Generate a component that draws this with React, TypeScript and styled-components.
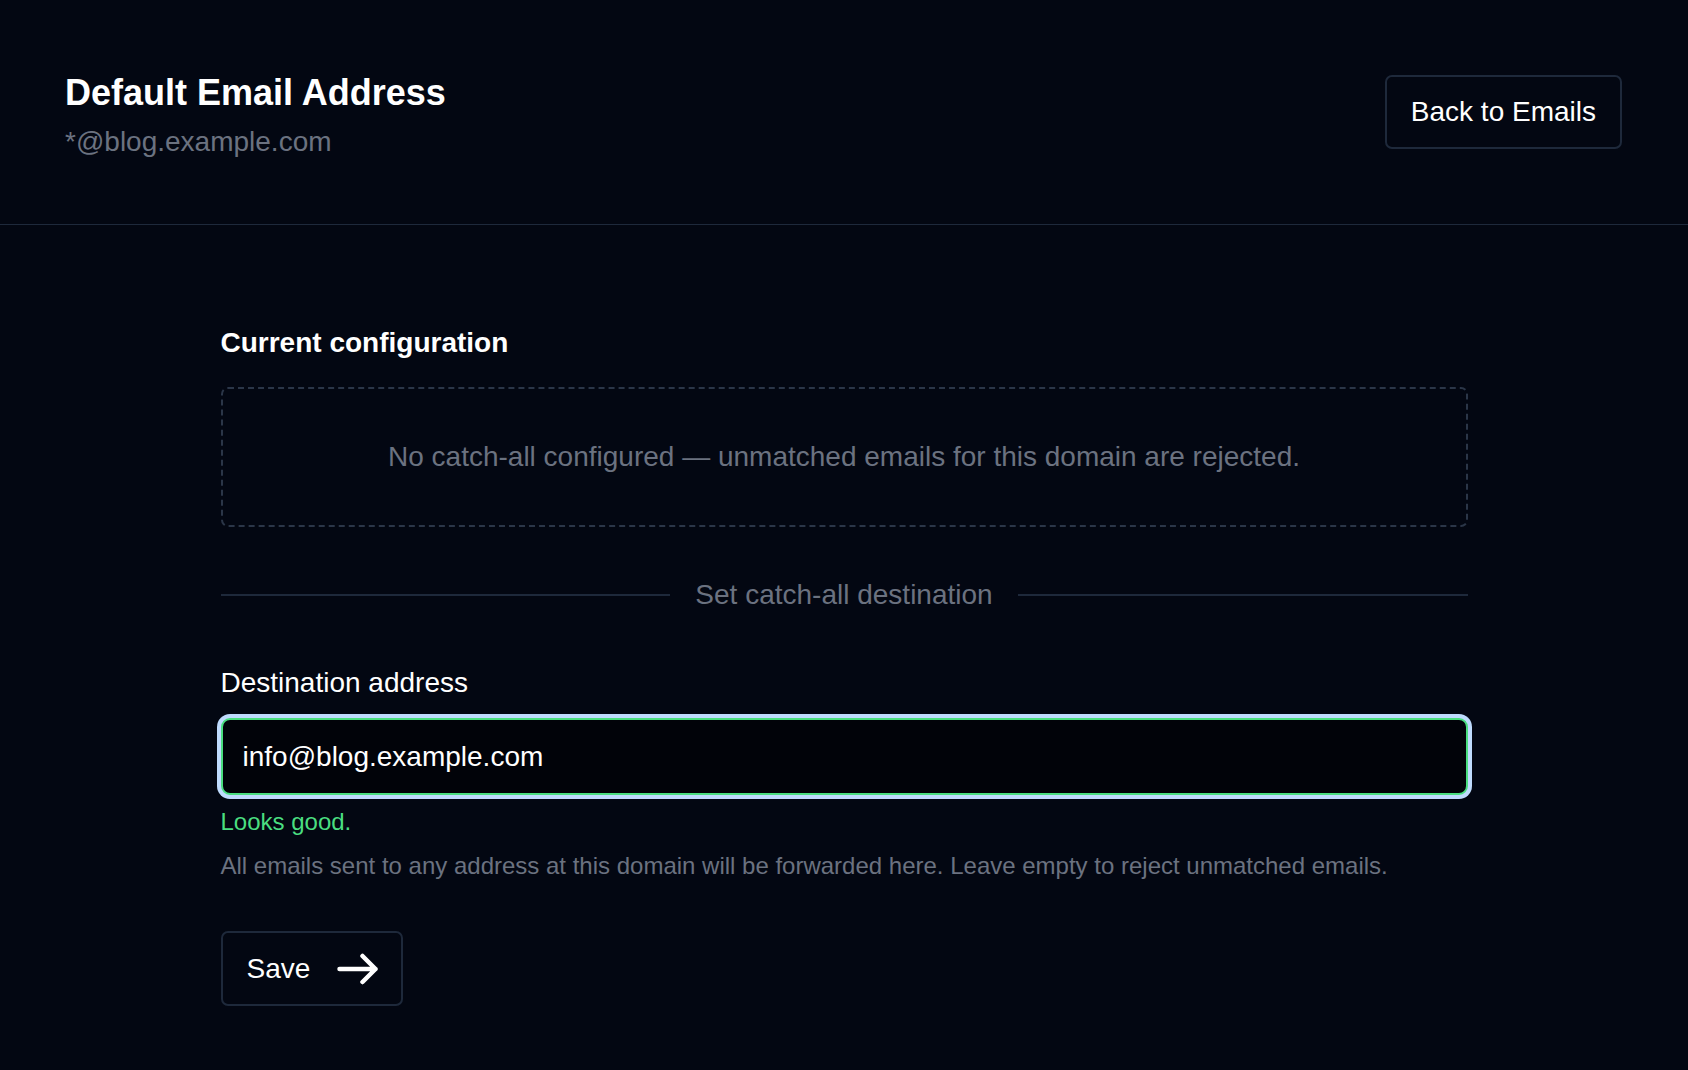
import React from 'react'
import styled, { createGlobalStyle } from 'styled-components'

const GlobalStyle = createGlobalStyle`
  html, body {
    margin: 0;
    padding: 0;
    background: #030712;
  }

  body {
    font-family: 'Liberation Sans', Arial, sans-serif;
    color: #f8fafc;
  }

  * {
    box-sizing: border-box;
  }
`

const Page = styled.div`
  min-height: 1070px;
  background: #030712;
`

const Header = styled.header`
  display: flex;
  justify-content: space-between;
  align-items: flex-start;
  padding: 75px 66px 61px 65px;
  border-bottom: 1px solid #1e293b;
`

const TitleBlock = styled.div`
  display: flex;
  flex-direction: column;
`

const Title = styled.h1`
  margin: 0;
  font-size: 36px;
  line-height: 36px;
  font-weight: 700;
  color: #ffffff;
`

const Subtitle = styled.p`
  margin: 10px 0 0;
  font-size: 28px;
  line-height: 42px;
  color: #6b7280;
`

const OutlineButton = styled.button<{ $height: number; $padding: string }>`
  display: inline-flex;
  align-items: center;
  gap: 27px;
  height: ${({ $height }) => $height}px;
  padding: ${({ $padding }) => $padding};
  background: transparent;
  border: 2px solid #1e293b;
  border-radius: 7px;
  font-family: inherit;
  font-size: 28px;
  color: #ffffff;
  cursor: pointer;
`

const Main = styled.main`
  width: 1247px;
  margin: 0 auto;
  padding-top: 97px;
  display: flex;
  flex-direction: column;
`

const SectionTitle = styled.h2`
  margin: 0;
  font-size: 28px;
  line-height: 42px;
  font-weight: 700;
  color: #ffffff;
`

const EmptyBox = styled.div`
  margin-top: 23px;
  padding: 47px 20px;
  border: 2px dashed #2b3648;
  border-radius: 7px;
  text-align: center;
  font-size: 28px;
  line-height: 42px;
  color: #6b7280;
`

const DividerRow = styled.div`
  margin-top: 47px;
  display: flex;
  align-items: center;
  gap: 25px;
  font-size: 28px;
  line-height: 42px;
  color: #6b7280;

  &::before,
  &::after {
    content: '';
    flex: 1;
    height: 2px;
    background: #1e293b;
  }
`

const Label = styled.label`
  margin-top: 46px;
  font-size: 28px;
  line-height: 42px;
  color: #ffffff;
`

const Input = styled.input`
  margin-top: 14px;
  height: 77px;
  width: 100%;
  padding: 0 20px;
  background: #010309;
  border: 2.5px solid #4ade80;
  border-radius: 9px;
  box-shadow: 0 0 0 4px #bfdbfe;
  outline: none;
  font-family: inherit;
  font-size: 28px;
  color: #ffffff;
`

const Hint = styled.p<{ $tone: 'success' | 'muted' }>`
  margin: ${({ $tone }) => ($tone === 'success' ? '9px' : '8px')} 0 0;
  font-size: 24px;
  line-height: 36px;
  color: ${({ $tone }) => ($tone === 'success' ? '#4ade80' : '#6b7280')};
`

const Actions = styled.div`
  margin-top: 47px;
  display: flex;
`

const ArrowIcon = () => (
  <svg width="41" height="32" viewBox="0 0 41 32" fill="none">
    <path
      d="M2.5 16H38.5M25.5 3L38.5 16L25.5 29"
      stroke="#ffffff"
      strokeWidth="4.5"
      strokeLinecap="round"
      strokeLinejoin="round"
    />
  </svg>
)

export default function App() {
  return (
    <>
      <GlobalStyle />
      <Page>
        <Header>
          <TitleBlock>
            <Title>Default Email Address</Title>
            <Subtitle>*@blog.example.com</Subtitle>
          </TitleBlock>
          <OutlineButton $height={74} $padding="0 24px">
            Back to Emails
          </OutlineButton>
        </Header>

        <Main>
          <SectionTitle>Current configuration</SectionTitle>
          <EmptyBox>
            No catch-all configured — unmatched emails for this domain are
            rejected.
          </EmptyBox>

          <DividerRow>Set catch-all destination</DividerRow>

          <Label htmlFor="destination">Destination address</Label>
          <Input
            id="destination"
            type="email"
            defaultValue="info@blog.example.com"
          />
          <Hint $tone="success">Looks good.</Hint>
          <Hint $tone="muted">
            All emails sent to any address at this domain will be forwarded
            here. Leave empty to reject unmatched emails.
          </Hint>

          <Actions>
            <OutlineButton $height={75} $padding="0 23px 0 24px">
              Save
              <ArrowIcon />
            </OutlineButton>
          </Actions>
        </Main>
      </Page>
    </>
  )
}
